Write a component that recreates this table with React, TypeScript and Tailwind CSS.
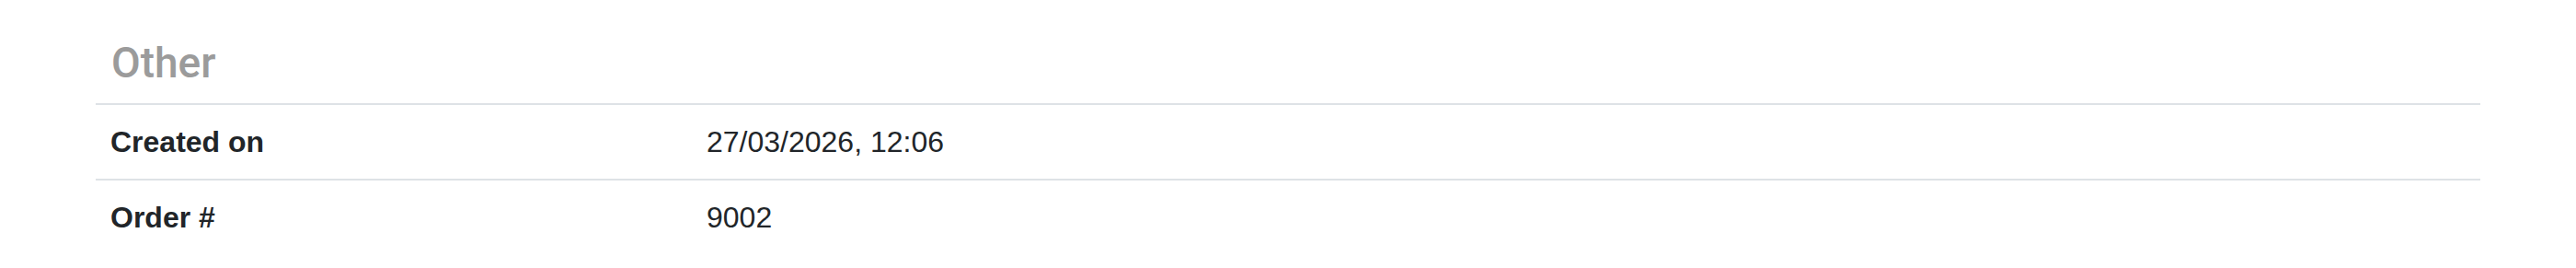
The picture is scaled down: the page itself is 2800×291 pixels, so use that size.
import React from "react";

interface DetailRow {
  label: string;
  value: string;
}

const rows: DetailRow[] = [
  { label: "Created on", value: "27/03/2026, 12:06" },
  { label: "Order #", value: "9002" },
];

const App: React.FC = () => {
  return (
    <div className="bg-white min-h-[291px] px-[104px] pt-[41px] font-['Liberation_Sans',Arial,sans-serif] text-[#212529]">
      <h2 className="font-['Roboto',sans-serif] text-[46px] leading-[55px] font-medium text-[#9b9b9b] pl-[17px] mb-[16px]">
        Other
      </h2>
      <table className="w-full border-collapse">
        <tbody>
          {rows.map((row) => (
            <tr key={row.label} className="border-t-2 border-[#dee2e6]">
              <th className="w-1/4 text-left align-top font-bold text-[32px] leading-[48px] px-[16px] py-[16px]">
                {row.label}
              </th>
              <td className="text-left align-top text-[32px] leading-[48px] px-[16px] py-[16px]">
                {row.value}
              </td>
            </tr>
          ))}
        </tbody>
      </table>
    </div>
  );
};

export default App;
